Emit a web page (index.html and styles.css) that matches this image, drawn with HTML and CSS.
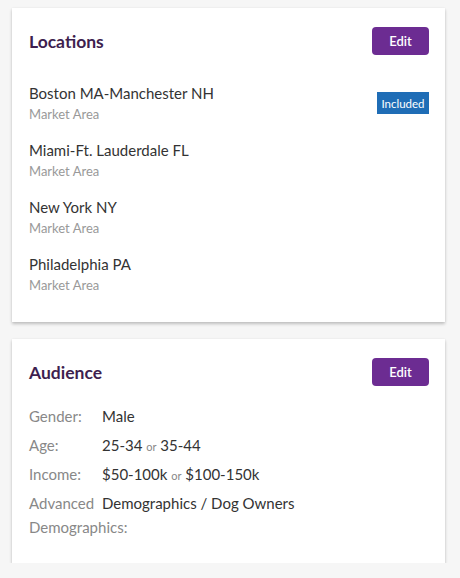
FILE: index.html
```html
<!DOCTYPE html>
<html>
<head>
<meta charset="utf-8">
<link rel="stylesheet" href="styles.css">
</head>
<body>
<div class="page">
  <section class="card">
    <div class="card-head">
      <h2 class="title">Locations</h2>
      <button class="edit">Edit</button>
    </div>
    <ul class="locs">
      <li class="loc">
        <div><div class="loc-name">Boston MA-Manchester NH</div><div class="loc-sub">Market Area</div></div>
        <span class="badge">Included</span>
      </li>
      <li class="loc"><div><div class="loc-name">Miami-Ft. Lauderdale FL</div><div class="loc-sub">Market Area</div></div></li>
      <li class="loc"><div><div class="loc-name">New York NY</div><div class="loc-sub">Market Area</div></div></li>
      <li class="loc"><div><div class="loc-name">Philadelphia PA</div><div class="loc-sub">Market Area</div></div></li>
    </ul>
  </section>
  <section class="card card2">
    <div class="card-head">
      <h2 class="title">Audience</h2>
      <button class="edit">Edit</button>
    </div>
    <dl class="aud">
      <dt>Gender:</dt><dd>Male</dd>
      <dt>Age:</dt><dd>25-34 <span class="or">or</span> 35-44</dd>
      <dt>Income:</dt><dd>$50-100k <span class="or">or</span> $100-150k</dd>
      <dt class="adv">Advanced<br>Demographics:</dt><dd class="adv-v">Demographics / Dog Owners</dd>
    </dl>
  </section>
</div>
</body>
</html>
```
FILE: styles.css
```css
* { box-sizing: border-box; }
html, body { margin: 0; padding: 0; background: #f6f6f6; }
body { font-family: Lato, "Open Sans", sans-serif; color: #333; }
.page { padding: 8px 15px 0 12px; display: flex; flex-direction: column; gap: 17px; }
.card { background: #fff; box-shadow: 0 2px 3px rgba(0,0,0,0.22), 0 0 2px rgba(0,0,0,0.06); padding: 19px 16px 26px 17px; }
.card-head { display: flex; justify-content: space-between; align-items: center; }
.title { margin: 0; font-size: 17.5px; font-weight: 700; color: #3e1f4f; }
.edit { width: 57px; height: 28px; border: none; border-radius: 4px; background: #6c2c92; color: #fff; font-family: inherit; font-size: 13px; font-weight: 600; padding: 0; }
.locs { list-style: none; margin: 28px 0 0; padding: 0; display: flex; flex-direction: column; gap: 15px; }
.loc { display: flex; justify-content: space-between; align-items: flex-start; }
.loc-name { font-size: 15px; line-height: 20px; color: #333; }
.loc-sub { font-size: 13px; line-height: 22px; color: #999; }
.badge { margin-top: 9px; width: 52px; height: 22px; background: #1f6db6; color: #fff; font-size: 11.5px; display: flex; align-items: center; justify-content: center; }
.card2 { padding-bottom: 24px; }
.aud { margin: 20px 0 0; display: grid; grid-template-columns: 73px 1fr; grid-auto-rows: auto; row-gap: 9px; font-size: 15px; line-height: 20px; }
.aud dt { color: #888; white-space: nowrap; height: 20px; }
.aud dd { margin: 0; color: #333; height: 20px; }
.aud .adv { line-height: 24px; margin-top: -2px; height: auto; }
.aud .adv-v { line-height: 24px; margin-top: -2px; height: 24px; }
.or { font-size: 11px; line-height: 0; color: #888; }
```
